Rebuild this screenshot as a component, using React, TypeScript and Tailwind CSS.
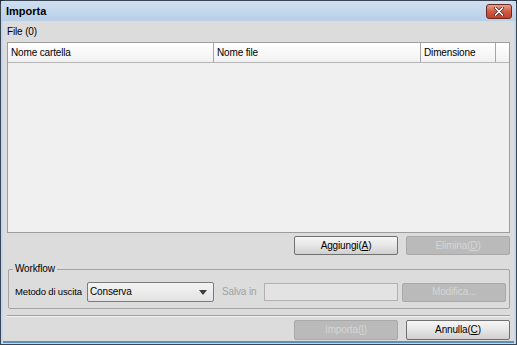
import React from 'react';

const font = { fontFamily: '"Liberation Sans", Arial, sans-serif' };

function Btn({ label, u, disabled }: { label: string; u: string; disabled?: boolean }) {
  const [pre, post] = label.split('|');
  return (
    <div
      className={
        disabled
          ? 'w-[104px] h-full shrink-0 flex items-center justify-center rounded-[2px] border border-[#a9a9a9] bg-[#bababa] text-[#d6d6d6]'
          : 'w-[104px] h-full shrink-0 flex items-center justify-center rounded-[2px] border border-[#707070] bg-gradient-to-b from-[#f6f6f6] via-[#e6e6e6] to-[#cfcfcf] text-black'
      }
    >
      <span>
        {pre}
        <span className="underline underline-offset-1">{u}</span>
        {post}
      </span>
    </div>
  );
}

export default function App() {
  return (
    <div
      className="w-[517px] h-[345px] overflow-hidden bg-[#1c2a3a] text-[10px] tracking-[-0.15px] leading-none whitespace-nowrap"
      style={font}
    >
      <div className="w-full h-full flex flex-col border border-[#3b4654] rounded-t-[6px] bg-[#c4d7ec]">
        {/* title bar */}
        <div className="h-[20px] shrink-0 flex items-center justify-between pl-[5px] pr-[4px] bg-gradient-to-b from-[#cfdff1] to-[#b9cfe8]">
          <span className="text-[11px] font-bold tracking-normal text-black">Importa</span>
          <div className="w-[26px] h-[15px] mt-[1px] rounded-[3px] border border-[#6b2a22] bg-gradient-to-b from-[#e6a190] via-[#cf5a45] to-[#c0412c] flex items-center justify-center">
            <svg width="10" height="9" viewBox="0 0 10 9">
              <path d="M1.5 1 L8.5 8 M8.5 1 L1.5 8" stroke="#4a1a14" strokeWidth="3" strokeLinecap="round" />
              <path d="M1.5 1 L8.5 8 M8.5 1 L1.5 8" stroke="#ffffff" strokeWidth="1.7" strokeLinecap="round" />
            </svg>
          </div>
        </div>

        {/* content */}
        <div className="flex-1 mx-[2px] mb-[1px] bg-[#dcdcdc] pl-[4px] pr-[4px] flex flex-col border-b-[2px] border-[#5a8fc4]">
          <div className="h-[21px] flex items-center">
            <span>File (0)</span>
          </div>

          {/* table */}
          <div className="h-[191px] border border-[#9d9d9d] bg-[#f0f0f0] flex flex-col">
            <div className="h-[20px] flex border-b border-[#b5b5b5] bg-gradient-to-b from-white to-[#f1f1f1]">
              <div className="w-[206px] flex items-center pl-[3px] border-r border-[#a5a5a5]">Nome cartella</div>
              <div className="w-[207px] flex items-center pl-[3px] border-r border-[#a5a5a5]">Nome file</div>
              <div className="w-[75px] flex items-center pl-[3px] border-r border-[#a5a5a5]">Dimensione</div>
              <div className="flex-1" />
            </div>
          </div>

          {/* add / delete */}
          <div className="h-[19px] mt-[3px] flex justify-end gap-[8px]">
            <Btn label="Aggiungi(|)" u="A" />
            <Btn label="Elimina(|)" u="D" disabled />
          </div>

          {/* workflow group */}
          <div className="relative ml-[1px] mt-[14px] h-[40px] border border-[#a4a4a4] rounded-[2px] flex items-center pl-[6px] pt-[6px]">
            <span className="absolute left-[4px] top-[-6px] px-[2px] bg-[#dcdcdc]">Workflow</span>
            <span className="shrink-0 w-[72px] text-[9.5px]">Metodo di uscita</span>
            <div className="shrink-0 w-[127px] h-[20px] rounded-[2px] border border-[#7b7b7b] bg-gradient-to-b from-[#f4f4f4] to-[#e2e2e2] flex items-center justify-between pl-[2px] pr-[6px]">
              <span>Conserva</span>
              <svg width="8" height="5" viewBox="0 0 8 5">
                <path d="M0 0 H8 L4 5 Z" fill="#3c3c3c" />
              </svg>
            </div>
            <span className="shrink-0 w-[42px] ml-[8px] text-[#a2a2a2]">Salva in</span>
            <div className="shrink-0 w-[134px] h-[18px] border border-[#b1b1b1] bg-[#e3e3e3]" />
            <div className="shrink-0 ml-[4px] w-[104px] h-[19px] flex items-center justify-center rounded-[2px] border border-[#a9a9a9] bg-[#bababa] text-[#d6d6d6]">
              Modifica...
            </div>
          </div>

          {/* separator */}
          <div className="mt-[6px] h-[2px] border-t border-[#a0a0a0] border-b border-b-[#f2f2f2]" />

          {/* import / cancel */}
          <div className="h-[20px] mt-[3px] flex justify-end gap-[8px]">
            <Btn label="Importa(|)" u="I" disabled />
            <Btn label="Annulla(|)" u="C" />
          </div>
        </div>
      </div>
    </div>
  );
}
